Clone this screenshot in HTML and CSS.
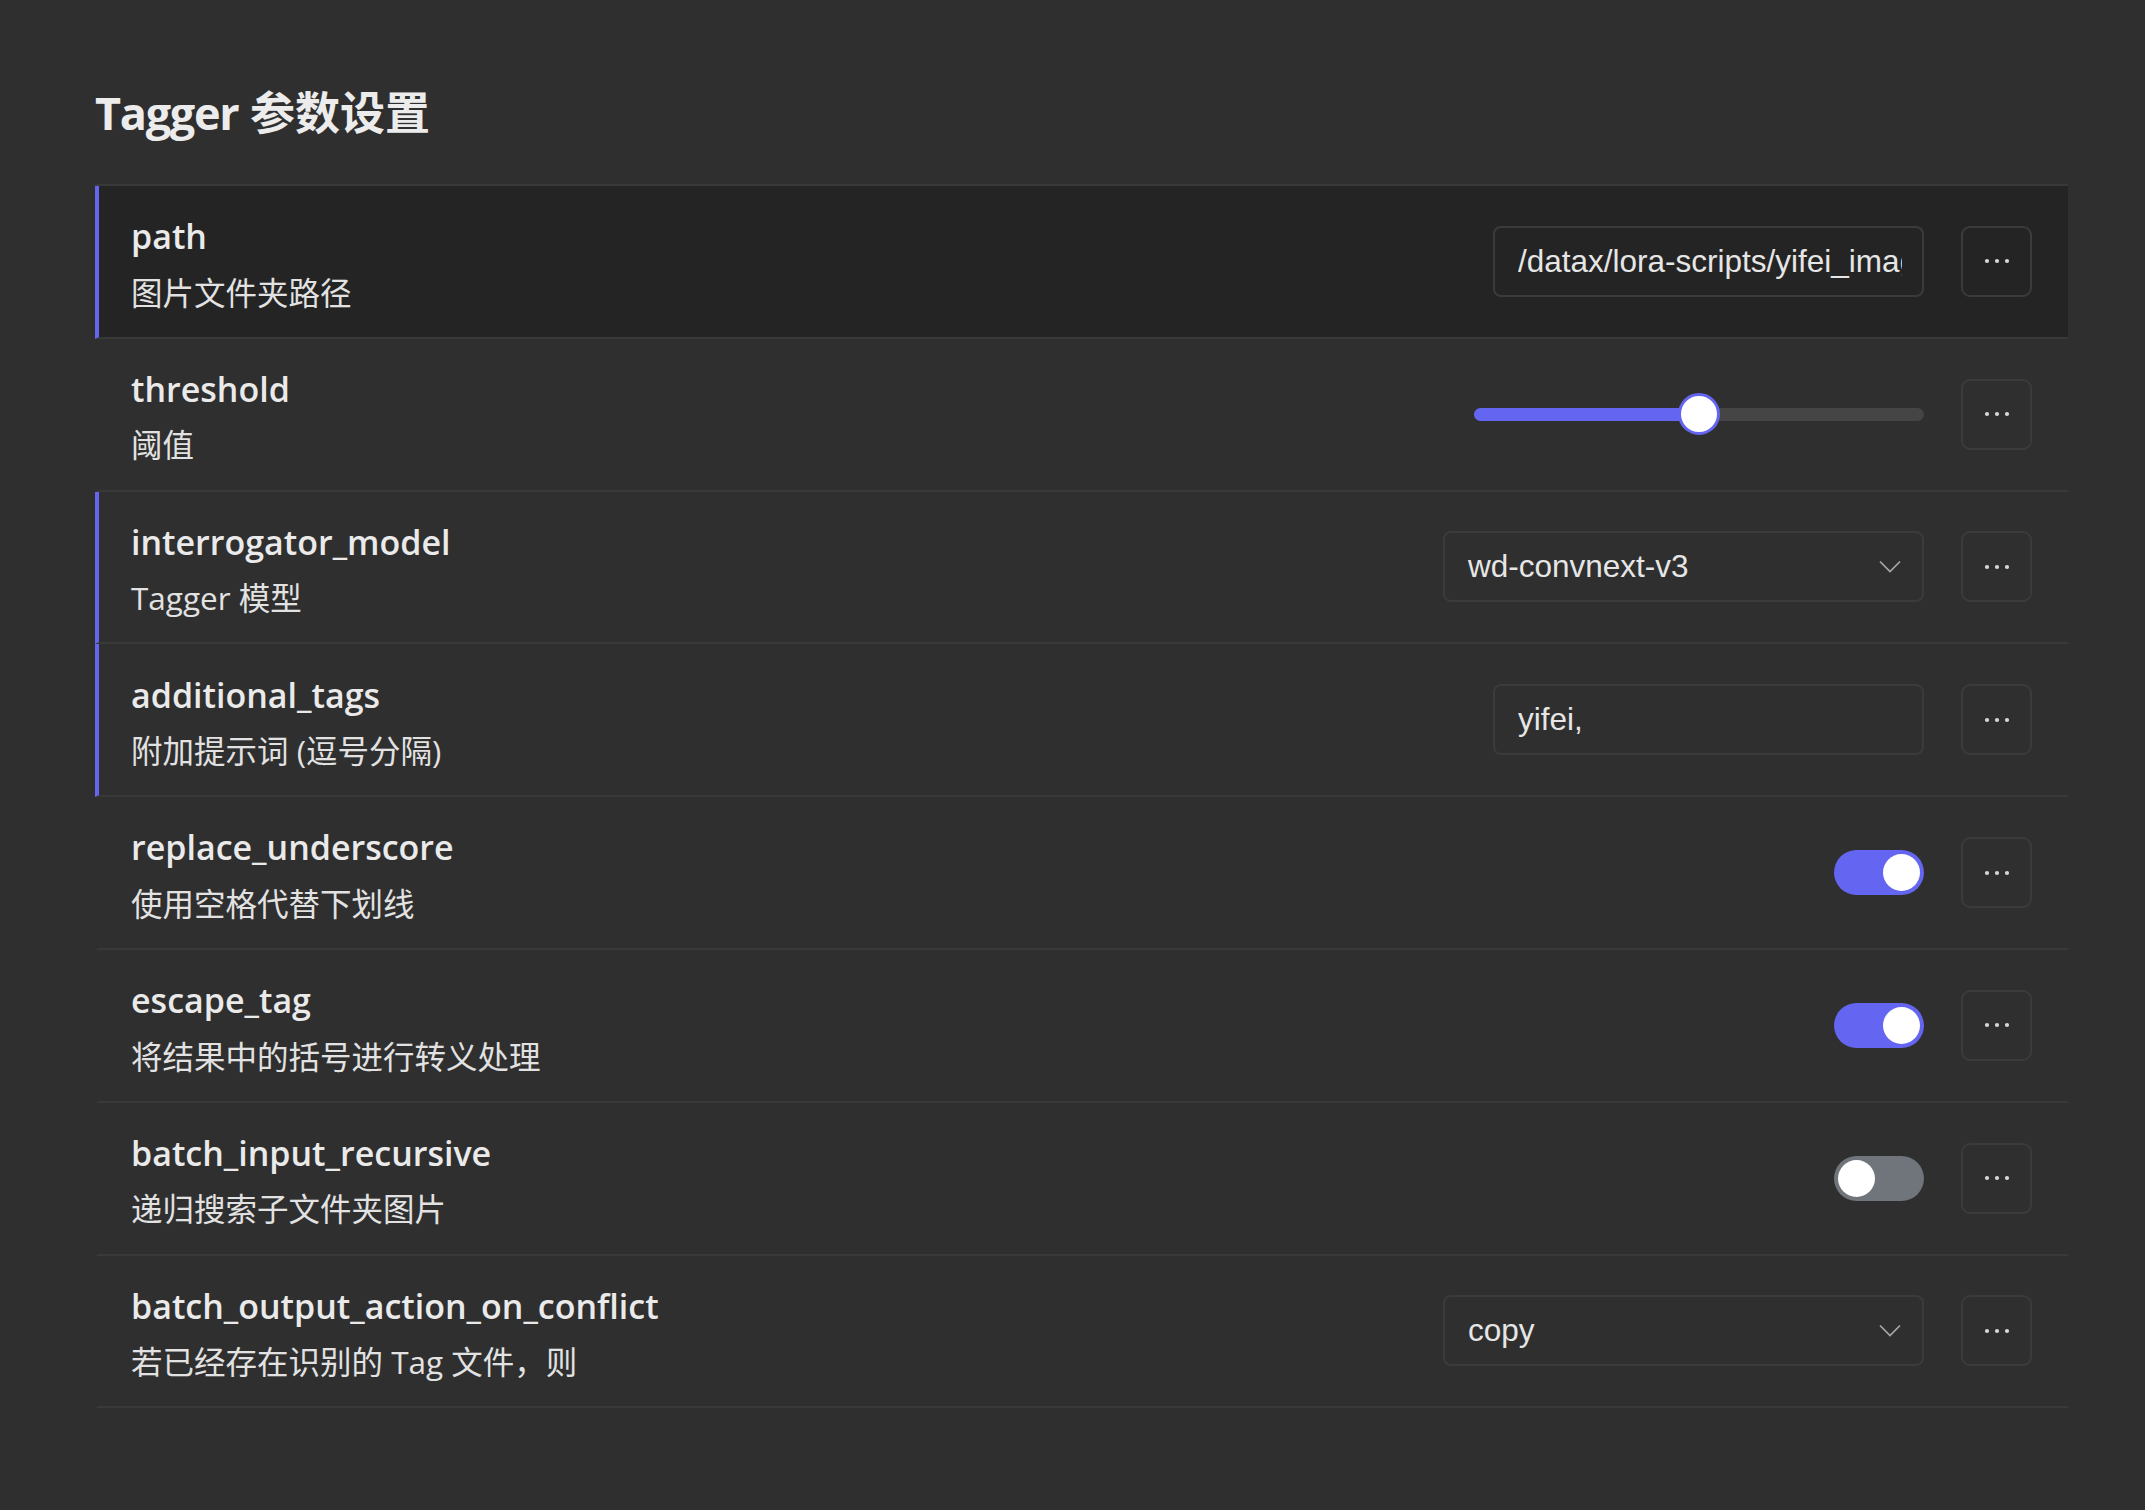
FILE: index.html
```html
<!DOCTYPE html>
<html lang="zh">
<head>
<meta charset="utf-8">
<title>Tagger 参数设置</title>
<link rel="stylesheet" href="styles.css">
</head>
<body>
<main class="page">
  <h1 class="title"><span class="title-en">Tagger</span> 参数设置</h1>
  <div class="list">
    <div class="row hl hover">
      <div class="info"><div class="label">path</div><div class="desc">图片文件夹路径</div></div>
      <div class="ctrl"><input class="text-input" type="text" value="/datax/lora-scripts/yifei_images"></div>
      <button class="more" type="button"><svg width="26" height="6" viewBox="0 0 26 6"><circle cx="3" cy="3" r="2.1"/><circle cx="13" cy="3" r="2.1"/><circle cx="23" cy="3" r="2.1"/></svg></button>
    </div>
    <div class="row">
      <div class="info"><div class="label">threshold</div><div class="desc">阈值</div></div>
      <div class="ctrl"><div class="slider"><div class="fill" style="width:50%"></div><div class="thumb" style="left:50%"></div></div></div>
      <button class="more" type="button"><svg width="26" height="6" viewBox="0 0 26 6"><circle cx="3" cy="3" r="2.1"/><circle cx="13" cy="3" r="2.1"/><circle cx="23" cy="3" r="2.1"/></svg></button>
    </div>
    <div class="row hl">
      <div class="info"><div class="label">interrogator_model</div><div class="desc">Tagger 模型</div></div>
      <div class="ctrl"><div class="select"><span>wd-convnext-v3</span><svg class="chev" width="22" height="13" viewBox="0 0 22 13"><polyline points="1,1.5 11,11.5 21,1.5"/></svg></div></div>
      <button class="more" type="button"><svg width="26" height="6" viewBox="0 0 26 6"><circle cx="3" cy="3" r="2.1"/><circle cx="13" cy="3" r="2.1"/><circle cx="23" cy="3" r="2.1"/></svg></button>
    </div>
    <div class="row hl">
      <div class="info"><div class="label">additional_tags</div><div class="desc">附加提示词 (逗号分隔)</div></div>
      <div class="ctrl"><input class="text-input" type="text" value="yifei,"></div>
      <button class="more" type="button"><svg width="26" height="6" viewBox="0 0 26 6"><circle cx="3" cy="3" r="2.1"/><circle cx="13" cy="3" r="2.1"/><circle cx="23" cy="3" r="2.1"/></svg></button>
    </div>
    <div class="row">
      <div class="info"><div class="label">replace_underscore</div><div class="desc">使用空格代替下划线</div></div>
      <div class="ctrl"><div class="toggle on"><div class="knob"></div></div></div>
      <button class="more" type="button"><svg width="26" height="6" viewBox="0 0 26 6"><circle cx="3" cy="3" r="2.1"/><circle cx="13" cy="3" r="2.1"/><circle cx="23" cy="3" r="2.1"/></svg></button>
    </div>
    <div class="row">
      <div class="info"><div class="label">escape_tag</div><div class="desc">将结果中的括号进行转义处理</div></div>
      <div class="ctrl"><div class="toggle on"><div class="knob"></div></div></div>
      <button class="more" type="button"><svg width="26" height="6" viewBox="0 0 26 6"><circle cx="3" cy="3" r="2.1"/><circle cx="13" cy="3" r="2.1"/><circle cx="23" cy="3" r="2.1"/></svg></button>
    </div>
    <div class="row">
      <div class="info"><div class="label">batch_input_recursive</div><div class="desc">递归搜索子文件夹图片</div></div>
      <div class="ctrl"><div class="toggle"><div class="knob"></div></div></div>
      <button class="more" type="button"><svg width="26" height="6" viewBox="0 0 26 6"><circle cx="3" cy="3" r="2.1"/><circle cx="13" cy="3" r="2.1"/><circle cx="23" cy="3" r="2.1"/></svg></button>
    </div>
    <div class="row">
      <div class="info"><div class="label">batch_output_action_on_conflict</div><div class="desc">若已经存在识别的 Tag 文件，则</div></div>
      <div class="ctrl"><div class="select"><span>copy</span><svg class="chev" width="22" height="13" viewBox="0 0 22 13"><polyline points="1,1.5 11,11.5 21,1.5"/></svg></div></div>
      <button class="more" type="button"><svg width="26" height="6" viewBox="0 0 26 6"><circle cx="3" cy="3" r="2.1"/><circle cx="13" cy="3" r="2.1"/><circle cx="23" cy="3" r="2.1"/></svg></button>
    </div>
  </div>
</main>
</body>
</html>
```
FILE: styles.css
```css
html, body {
  margin: 0;
  padding: 0;
  background: #2f2f2f;
}
body {
  min-height: 1510px;
  font-family: "Open Sans", "Noto Sans CJK SC", sans-serif;
  color: #e8e8e8;
}
.page {
  padding: 86px 77px 0 95px;
}
.title {
  margin: 0 0 45px;
  font-size: 45px;
  line-height: 53px;
  font-weight: 700;
  color: #ececec;
}
.title-en {
  letter-spacing: -1.3px;
}
.list {
  border-top: 2px solid #393939;
}
.row {
  display: flex;
  align-items: center;
  height: 150.8px;
  box-sizing: content-box;
  border-bottom: 2px solid #393939;
  border-left: 4px solid transparent;
  padding: 0 36px 0 32px;
}
.row.hl {
  border-left-color: #6466f1;
}
.row.hover {
  background: #242424;
}
.info {
  flex: 1;
  padding-top: 6px;
}
.label {
  font-size: 34px;
  line-height: 50px;
  font-weight: 600;
  color: #eaeaea;
}
.desc {
  margin-top: 6.5px;
  font-size: 31.5px;
  line-height: 50px;
  font-weight: 400;
  color: #e2e2e2;
}
.ctrl {
  margin-right: 37px;
  display: flex;
  align-items: center;
}
.text-input {
  box-sizing: border-box;
  width: 431px;
  height: 71px;
  margin: 0;
  border: 2px solid #3b3b3b;
  border-radius: 8px;
  padding: 0 20px 0 23px;
  background: transparent;
  outline: none;
  font-family: "Liberation Sans", Arial, sans-serif;
  font-size: 31.5px;
  line-height: 67px;
  color: #e6e6e6;
}
.select {
  box-sizing: border-box;
  width: 481px;
  height: 71px;
  border: 2px solid #3b3b3b;
  border-radius: 8px;
  padding: 0 21px 0 23px;
  display: flex;
  align-items: center;
  justify-content: space-between;
  font-family: "Liberation Sans", Arial, sans-serif;
  font-size: 31.5px;
  color: #e6e6e6;
}
.chev polyline {
  fill: none;
  stroke: #a8a8a8;
  stroke-width: 1.7;
}
.slider {
  position: relative;
  width: 450px;
  height: 13px;
  border-radius: 7px;
  background: #454545;
}
.fill {
  height: 100%;
  border-radius: 7px;
  background: #6466f1;
}
.thumb {
  position: absolute;
  top: 50%;
  width: 36px;
  height: 36px;
  border: 3.5px solid #6466f1;
  border-radius: 50%;
  background: #ffffff;
  transform: translate(-50%, -50%);
}
.toggle {
  box-sizing: border-box;
  width: 90px;
  height: 45px;
  border-radius: 23px;
  padding: 4px;
  background: #70747b;
  display: flex;
  justify-content: flex-start;
}
.toggle.on {
  background: #6466f1;
  justify-content: flex-end;
}
.knob {
  width: 37px;
  height: 37px;
  border-radius: 50%;
  background: #ffffff;
}
.more {
  box-sizing: border-box;
  width: 71px;
  height: 71px;
  padding: 0;
  border: 2px solid #3b3b3b;
  border-radius: 9px;
  background: transparent;
  display: flex;
  align-items: center;
  justify-content: center;
}
.more svg circle {
  fill: #d8d8d8;
}
```
